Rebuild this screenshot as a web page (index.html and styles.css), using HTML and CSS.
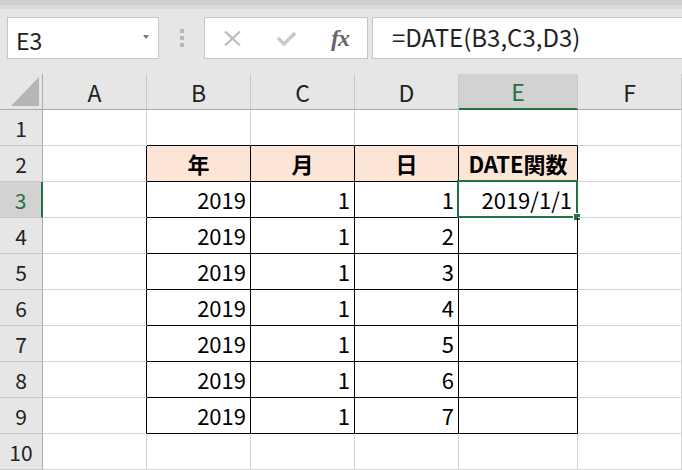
FILE: index.html
```html
<!DOCTYPE html>
<html>
	<head>
		<title>DATE関数</title>
		<link rel="stylesheet" href="styles.css">
	</head>

	<body>
		<div class="strip"></div>

		<div class="toolbar">
			<div class="namebox">
				<span>E3</span>
				<span class="arrow"></span>
			</div>

			<div class="sep">
				<i></i><i></i><i></i>
			</div>

			<div class="buttons">
				<span class="btn">
					<svg width="17" height="15" viewBox="0 0 17 15"><path d="M1 0.5 L16 14.5 M16 0.5 L1 14.5" stroke="#bdbdbd" stroke-width="2.2" fill="none"/></svg>
				</span>
				<span class="btn">
					<svg width="19" height="15" viewBox="0 0 19 15"><path d="M1 7 L7 13 L18 2" stroke="#c9c9c9" stroke-width="3.4" fill="none"/></svg>
				</span>
				<span class="btn fx">fx</span>
			</div>

			<div class="formula">=DATE(B3,C3,D3)</div>
		</div>

		<div class="sheet">
			<div class="row head">
				<div class="corner">
					<svg width="28" height="29" viewBox="0 0 28 29"><polygon points="28,0 28,29 0,29" fill="#b5b5b5"/></svg>
				</div>
				<div class="ch">A</div>
				<div class="ch">B</div>
				<div class="ch">C</div>
				<div class="ch">D</div>
				<div class="ch on">E</div>
				<div class="ch">F</div>
			</div>

			<div class="row">
				<div class="rh">1</div>
				<div class="c"></div>
				<div class="c tt"></div>
				<div class="c tt"></div>
				<div class="c tt"></div>
				<div class="c tt"></div>
				<div class="c"></div>
			</div>

			<div class="row">
				<div class="rh">2</div>
				<div class="c tl"></div>
				<div class="c t th">年</div>
				<div class="c t th">月</div>
				<div class="c t th">日</div>
				<div class="c t th">DATE関数</div>
				<div class="c"></div>
			</div>

			<div class="row">
				<div class="rh on">3</div>
				<div class="c tl"></div>
				<div class="c t">2019</div>
				<div class="c t">1</div>
				<div class="c t">1</div>
				<div class="c t sel">2019/1/1<span class="handle"></span></div>
				<div class="c"></div>
			</div>

			<div class="row">
				<div class="rh">4</div>
				<div class="c tl"></div>
				<div class="c t">2019</div>
				<div class="c t">1</div>
				<div class="c t">2</div>
				<div class="c t"></div>
				<div class="c"></div>
			</div>

			<div class="row">
				<div class="rh">5</div>
				<div class="c tl"></div>
				<div class="c t">2019</div>
				<div class="c t">1</div>
				<div class="c t">3</div>
				<div class="c t"></div>
				<div class="c"></div>
			</div>

			<div class="row">
				<div class="rh">6</div>
				<div class="c tl"></div>
				<div class="c t">2019</div>
				<div class="c t">1</div>
				<div class="c t">4</div>
				<div class="c t"></div>
				<div class="c"></div>
			</div>

			<div class="row">
				<div class="rh">7</div>
				<div class="c tl"></div>
				<div class="c t">2019</div>
				<div class="c t">1</div>
				<div class="c t">5</div>
				<div class="c t"></div>
				<div class="c"></div>
			</div>

			<div class="row">
				<div class="rh">8</div>
				<div class="c tl"></div>
				<div class="c t">2019</div>
				<div class="c t">1</div>
				<div class="c t">6</div>
				<div class="c t"></div>
				<div class="c"></div>
			</div>

			<div class="row">
				<div class="rh">9</div>
				<div class="c tl"></div>
				<div class="c t">2019</div>
				<div class="c t">1</div>
				<div class="c t">7</div>
				<div class="c t"></div>
				<div class="c"></div>
			</div>

			<div class="row">
				<div class="rh">10</div>
				<div class="c"></div>
				<div class="c"></div>
				<div class="c"></div>
				<div class="c"></div>
				<div class="c"></div>
				<div class="c"></div>
			</div>
		</div>
	</body>
</html>
```

FILE: styles.css
```css
		* {
			box-sizing: border-box;
		}

		body {
			margin: 0;
			width: 682px;
			height: 470px;
			overflow: hidden;
			background: #ffffff;
			font-family: "Noto Sans CJK JP", sans-serif;
			color: #000000;
		}

		.strip {
			height: 9px;
			background: #d0d0d0;
			border-bottom: 4px solid #dadada;
		}

		.toolbar {
			display: flex;
			height: 65px;
			padding-top: 8px;
			align-items: flex-start;
			background: #e6e6e6;
		}

		.namebox {
			display: flex;
			align-items: center;
			justify-content: space-between;
			margin-left: 7px;
			width: 152px;
			height: 42px;
			padding: 3px 9px 0 8px;
			background: white;
			border: 1px solid #c6c6c6;
			font-size: 23px;
			color: #222222;
		}

		.arrow {
			width: 0;
			height: 0;
			border-left: 3px solid transparent;
			border-right: 3px solid transparent;
			border-top: 4px solid #777777;
			margin-top: -6px;
		}

		.sep {
			display: flex;
			flex-direction: column;
			align-items: center;
			justify-content: center;
			gap: 3px;
			width: 45px;
			height: 42px;
		}

		.sep i {
			width: 4px;
			height: 4px;
			background: #b8b8b8;
		}

		.buttons {
			display: flex;
			width: 164px;
			height: 42px;
			background: white;
			border: 1px solid #c6c6c6;
		}

		.btn {
			display: flex;
			align-items: center;
			justify-content: center;
			width: 54px;
		}

		.fx {
			font-family: "Liberation Serif", serif;
			font-style: italic;
			font-weight: bold;
			font-size: 24px;
			color: #666666;
			letter-spacing: -1px;
		}

		.formula {
			flex: 1;
			height: 42px;
			margin-left: 4px;
			margin-right: -1px;
			padding-left: 19px;
			line-height: 37px;
			background: white;
			border: 1px solid #c6c6c6;
			font-size: 24px;
			color: #222222;
		}

		.row {
			display: grid;
			grid-template-columns: 43px 104px 104px 104px 104px 119px 104px;
			height: 36px;
		}

		.head {
			background: #e6e6e6;
		}

		.corner {
			display: flex;
			align-items: flex-end;
			justify-content: flex-end;
			padding: 0 3px 3px 0;
			border-right: 1px solid #ababab;
			border-bottom: 1px solid #ababab;
		}

		.ch {
			display: flex;
			align-items: center;
			justify-content: center;
			font-size: 23px;
			color: #222222;
			border-right: 1px solid #c8c8c8;
			border-bottom: 1px solid #ababab;
		}

		.ch.on {
			background: #d2d2d2;
			color: #217346;
			border-bottom: 2px solid #217346;
		}

		.rh {
			display: flex;
			align-items: center;
			justify-content: center;
			background: #e6e6e6;
			font-size: 21px;
			color: #222222;
			border-right: 1px solid #ababab;
			border-bottom: 1px solid #c8c8c8;
		}

		.rh.on {
			background: #d2d2d2;
			color: #217346;
			border-right: 2px solid #217346;
		}

		.c {
			position: relative;
			display: flex;
			align-items: center;
			justify-content: flex-end;
			padding: 0 4px 2px 0;
			font-size: 22px;
			border-right: 1px solid #d4d4d4;
			border-bottom: 1px solid #d4d4d4;
		}

		.t {
			border-right-color: #000000;
			border-bottom-color: #000000;
		}

		.tl {
			border-right-color: #000000;
		}

		.tt {
			border-bottom-color: #000000;
		}

		.th {
			justify-content: center;
			padding-right: 0;
			background: #fce4d6;
			font-weight: bold;
		}

		.sel {
			padding-right: 5px;
		}

		.sel::before {
			content: "";
			position: absolute;
			top: -2px;
			left: -2px;
			right: -1px;
			bottom: -1px;
			border: 2px solid #217346;
		}

		.handle {
			position: absolute;
			right: -3px;
			bottom: -3px;
			width: 6px;
			height: 6px;
			background: #217346;
			box-shadow: 0 0 0 1px white;
		}
```
